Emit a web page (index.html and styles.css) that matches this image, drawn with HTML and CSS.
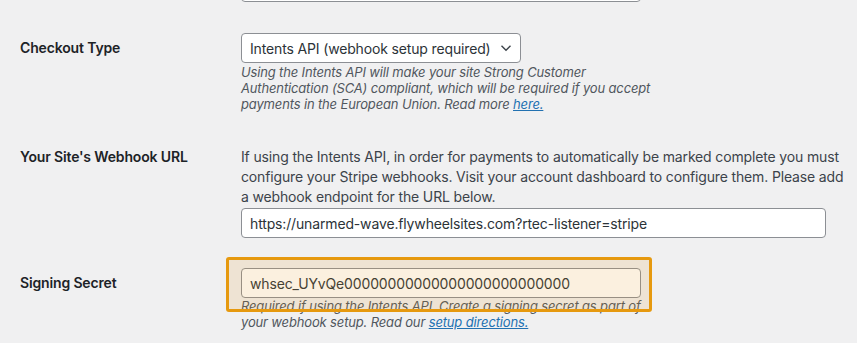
FILE: index.html
```html
<!DOCTYPE html>
<html lang="en">
<head>
<meta charset="UTF-8" />
<meta name="viewport" content="width=device-width, initial-scale=1" />
<title>Stripe Settings</title>
<link rel="stylesheet" href="styles.css">
</head>
<body>
<div class="settings">

  <div class="row row-first">
    <div class="label"></div>
    <div class="field">
      <input type="text" class="text-input" value="" />
    </div>
  </div>

  <div class="row row-checkout">
    <div class="label label-select">Checkout Type</div>
    <div class="field">
      <div class="select">
        <span>Intents API (webhook setup required)</span>
        <svg class="chevron" width="12" height="8" viewBox="0 0 12 8"><path d="M1.5 1.8 L6 6.2 L10.5 1.8" fill="none" stroke="#3c434a" stroke-width="1.4"/></svg>
      </div>
      <p class="description">Using the Intents API will make your site Strong Customer Authentication (SCA) compliant, which will be required if you accept payments in the European Union. Read more <a href="#">here.</a></p>
    </div>
  </div>

  <div class="row row-webhook">
    <div class="label label-text">Your Site's Webhook URL</div>
    <div class="field">
      <p class="intro">If using the Intents API, in order for payments to automatically be marked complete you must configure your Stripe webhooks. Visit your account dashboard to configure them. Please add a webhook endpoint for the URL below.</p>
      <input type="text" class="text-input wide" value="https://unarmed-wave.flywheelsites.com?rtec-listener=stripe" />
    </div>
  </div>

  <div class="row row-secret">
    <div class="label label-select">Signing Secret</div>
    <div class="field">
      <div class="highlight-wrap">
        <input type="text" class="text-input" value="whsec_UYvQe00000000000000000000000000" />
        <p class="description">Required if using the Intents API. Create a signing secret as part of your webhook setup. Read our <a href="#">setup directions.</a></p>
        <span class="highlight"></span>
      </div>
    </div>
  </div>

</div>
</body>
</html>
```

FILE: styles.css
```css
body {
  margin: 0;
  padding: 0 0 0 20px;
  background: #f0f0f1;
  color: #3c434a;
  font-family: Inter, "Noto Sans", sans-serif;
  font-size: 14px;
  letter-spacing: -0.15px;
  overflow: hidden;
}
.settings { margin-top: -28px; }
.row {
  display: grid;
  grid-template-columns: 220px 1fr;
}
.row-first { padding-bottom: 15px; }
.row-checkout { padding: 16px 0 15px; }
.row-webhook { padding: 20px 0 15px; }
.row-secret { padding: 15px 0 0; }

.label {
  color: #1d2327;
  font-weight: 600;
  font-size: 14px;
}
.label-select { line-height: 30px; }
.label-text { line-height: 20px; }

.text-input {
  display: block;
  box-sizing: border-box;
  width: 400px;
  height: 30px;
  margin: 0 0 0 1px;
  padding: 0 8px;
  border: 1px solid #8c8f94;
  border-radius: 4px;
  background: #fff;
  color: #2c3338;
  font-family: Inter, "Noto Sans", sans-serif;
  font-size: 14px;
  letter-spacing: -0.15px;
  outline: none;
}
.text-input.wide { width: 585px; margin-top: 1px; }

.select {
  display: inline-flex;
  align-items: center;
  gap: 9px;
  box-sizing: border-box;
  height: 30px;
  margin-left: 1px;
  padding: 0 8px 0 8px;
  border: 1px solid #8c8f94;
  border-radius: 4px;
  background: #fff;
  color: #2c3338;
}
.chevron { display: block; }

.description {
  margin: 1px 0 0 1px;
  max-width: 420px;
  font-size: 13px;
  line-height: 16px;
  font-style: italic;
  color: #50575e;
}
.row-secret .description { margin-top: 0; max-width: 422px; }
.description a { color: #2271b1; }

.intro {
  margin: 0 0 0 1px;
  max-width: 612px;
  line-height: 20px;
  color: #3c434a;
}

.highlight-wrap {
  position: relative;
}
.highlight {
  position: absolute;
  left: -14px;
  top: -11px;
  width: 426px;
  height: 55px;
  box-sizing: border-box;
  border: 3px solid #e6990f;
  border-radius: 3px;
  background: rgba(230, 150, 30, 0.14);
}
```
